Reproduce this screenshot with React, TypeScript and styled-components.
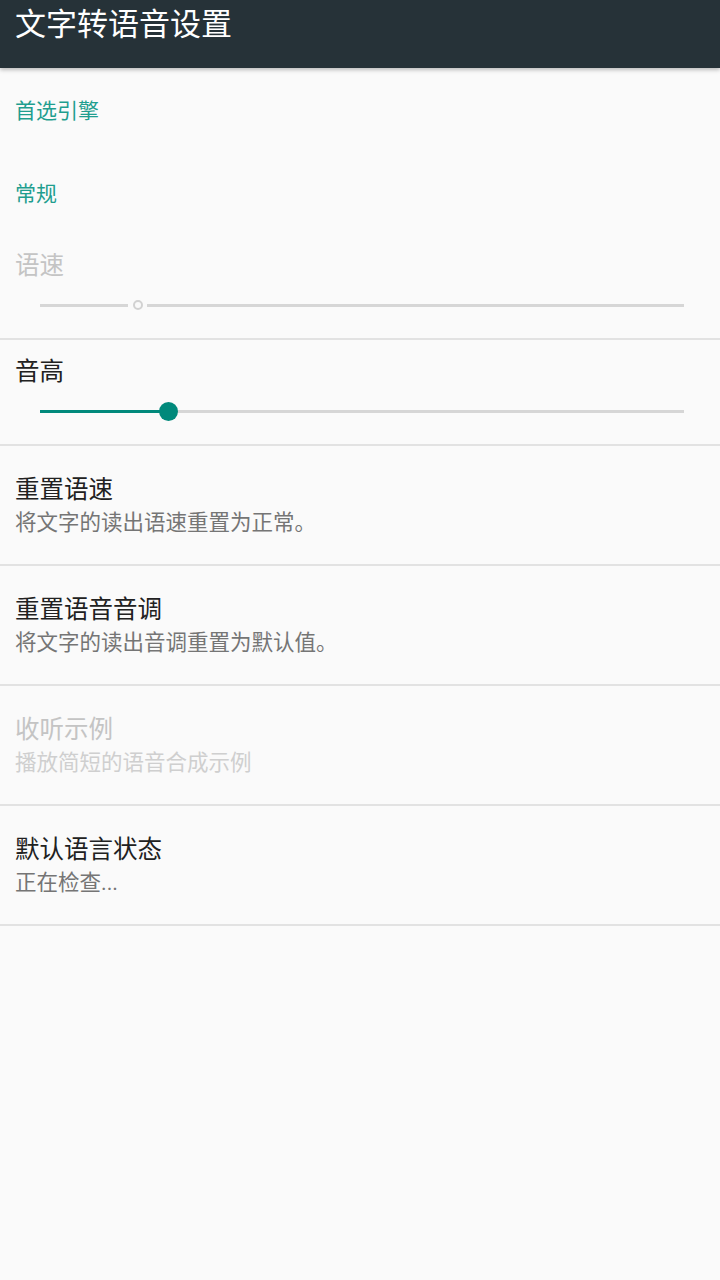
import React from 'react';
import styled, { createGlobalStyle } from 'styled-components';

const GlobalStyle = createGlobalStyle`
  html, body {
    margin: 0;
    padding: 0;
    background: #fafafa;
  }
  body {
    font-family: Roboto, "Noto Sans CJK SC", sans-serif;
  }
  * {
    box-sizing: border-box;
  }
`;

const Screen = styled.div`
  width: 720px;
  min-height: 1280px;
  background: #fafafa;
  display: flex;
  flex-direction: column;
`;

const Toolbar = styled.header`
  height: 68px;
  background: #263238;
  padding: 6px 15px 0;
  box-shadow: 0 2px 4px rgba(0, 0, 0, 0.25);
  position: relative;
  z-index: 1;
`;

const ToolbarTitle = styled.h1`
  margin: 0;
  font-size: 31px;
  line-height: 38px;
  font-weight: 400;
  color: #ffffff;
`;

const Category = styled.div`
  height: 83px;
  padding: 30px 15px 0;
  font-size: 21px;
  line-height: 26px;
  color: #1f9e8f;
`;

const SliderPref = styled.div`
  padding: 19px 0 7px;
  border-bottom: 2px solid #e2e2e2;
`;

const TextPref = styled.div`
  padding: 29px 15px 27px;
  border-bottom: 2px solid #e2e2e2;
`;

const PrefTitle = styled.div<{ disabled?: boolean }>`
  font-size: 24.5px;
  line-height: 30px;
  color: ${({ disabled }) => (disabled ? '#c4c4c4' : '#212121')};
`;

const SliderTitle = styled(PrefTitle)`
  padding: 0 15px;
  line-height: 26px;
`;

const PrefSummary = styled.div<{ disabled?: boolean }>`
  margin-top: 4px;
  font-size: 21.5px;
  line-height: 28px;
  color: ${({ disabled }) => (disabled ? '#cfcfcf' : '#757575')};
`;

const SliderRow = styled.div`
  height: 52px;
  margin: 0 36px 0 40px;
  position: relative;
  display: flex;
  align-items: center;
`;

const Track = styled.div<{ active?: boolean }>`
  height: 3px;
  background: ${({ active }) => (active ? '#00897b' : '#d6d6d6')};
`;

const Gap = styled.div`
  width: 19px;
  flex: none;
`;

const ActiveThumb = styled.div`
  position: absolute;
  top: 50%;
  width: 19px;
  height: 19px;
  margin: -9.5px 0 0 -9.5px;
  border-radius: 50%;
  background: #00897b;
`;

const DisabledThumb = styled.div`
  position: absolute;
  top: 50%;
  width: 10px;
  height: 10px;
  margin: -5px 0 0 -5px;
  border-radius: 50%;
  border: 2px solid #d2d2d2;
`;

const Slider: React.FC<{ value: number; disabled?: boolean }> = ({ value, disabled }) => {
  const pos = `${value}%`;
  if (disabled) {
    return (
      <SliderRow>
        <Track style={{ width: `calc(${pos} - 9.5px)` }} />
        <Gap />
        <Track style={{ flex: 1 }} />
        <DisabledThumb style={{ left: pos }} />
      </SliderRow>
    );
  }
  return (
    <SliderRow>
      <Track active style={{ width: pos }} />
      <Track style={{ flex: 1 }} />
      <ActiveThumb style={{ left: pos }} />
    </SliderRow>
  );
};

const prefs = [
  { title: '重置语速', summary: '将文字的读出语速重置为正常。' },
  { title: '重置语音音调', summary: '将文字的读出音调重置为默认值。' },
  { title: '收听示例', summary: '播放简短的语音合成示例', disabled: true },
  { title: '默认语言状态', summary: '正在检查...' },
];

export default function App() {
  return (
    <Screen>
      <GlobalStyle />
      <Toolbar>
        <ToolbarTitle>文字转语音设置</ToolbarTitle>
      </Toolbar>
      <Category>首选引擎</Category>
      <Category>常规</Category>
      <SliderPref>
        <SliderTitle disabled>语速</SliderTitle>
        <Slider value={15.2} disabled />
      </SliderPref>
      <SliderPref>
        <SliderTitle>音高</SliderTitle>
        <Slider value={20} />
      </SliderPref>
      {prefs.map((p) => (
        <TextPref key={p.title}>
          <PrefTitle disabled={p.disabled}>{p.title}</PrefTitle>
          <PrefSummary disabled={p.disabled}>{p.summary}</PrefSummary>
        </TextPref>
      ))}
    </Screen>
  );
}
